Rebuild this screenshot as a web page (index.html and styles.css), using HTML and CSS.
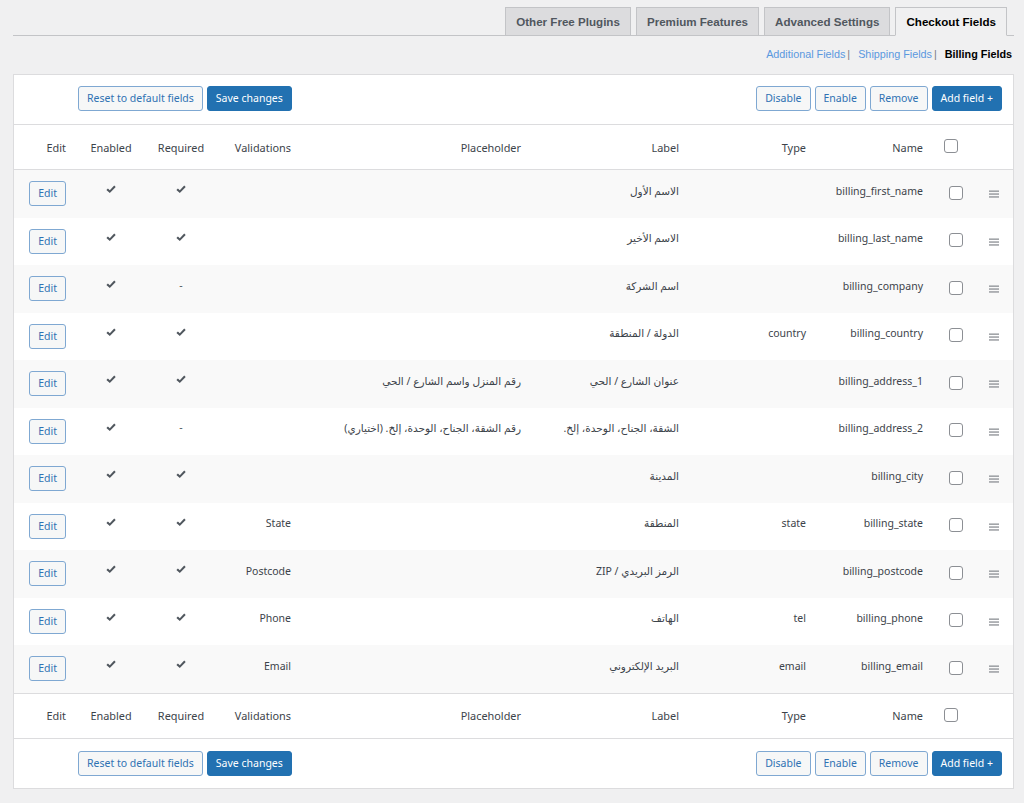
FILE: index.html
```html
<!DOCTYPE html>
<html lang="ar" dir="rtl">
<head>
<meta charset="utf-8">
<title>Checkout Fields</title>
<link rel="stylesheet" href="styles.css">
</head>
<body>
<div class="wrap">
  <nav class="tabs">
    <a class="tab active" href="#">Checkout Fields</a>
    <a class="tab" href="#">Advanced Settings</a>
    <a class="tab" href="#">Premium Features</a>
    <a class="tab" href="#">Other Free Plugins</a>
  </nav>

  <div class="subnav" dir="ltr">
    <a href="#" class="sublink">Additional Fields</a><span class="sep">|</span>
    <a href="#" class="sublink">Shipping Fields</a><span class="sep">|</span>
    <b class="current">Billing Fields</b>
  </div>

  <div class="box">
    <div class="actions">
      <div class="group">
        <button class="btn primary" dir="ltr">Add field +</button>
        <button class="btn">Remove</button>
        <button class="btn">Enable</button>
        <button class="btn">Disable</button>
      </div>
      <div class="group">
        <button class="btn primary">Save changes</button>
        <button class="btn">Reset to default fields</button>
      </div>
    </div>

    <div class="grid head">
      <div class="c c-drag"></div>
      <div class="c c-cb"><input type="checkbox" class="cb cb-head"></div>
      <div class="c c-name">Name</div>
      <div class="c c-type">Type</div>
      <div class="c c-label">Label</div>
      <div class="c c-ph">Placeholder</div>
      <div class="c c-val">Validations</div>
      <div class="c c-center">Required</div>
      <div class="c c-center">Enabled</div>
      <div class="c c-edit">Edit</div>
    </div>

    <div class="rows" id="rows"></div>

    <div class="grid head foot">
      <div class="c c-drag"></div>
      <div class="c c-cb"><input type="checkbox" class="cb cb-head"></div>
      <div class="c c-name">Name</div>
      <div class="c c-type">Type</div>
      <div class="c c-label">Label</div>
      <div class="c c-ph">Placeholder</div>
      <div class="c c-val">Validations</div>
      <div class="c c-center">Required</div>
      <div class="c c-center">Enabled</div>
      <div class="c c-edit">Edit</div>
    </div>

    <div class="actions bottom">
      <div class="group">
        <button class="btn primary" dir="ltr">Add field +</button>
        <button class="btn">Remove</button>
        <button class="btn">Enable</button>
        <button class="btn">Disable</button>
      </div>
      <div class="group">
        <button class="btn primary">Save changes</button>
        <button class="btn">Reset to default fields</button>
      </div>
    </div>
  </div>
</div>
<script src="script.js"></script>
</body>
</html>
```

FILE: script.js
```js
var data = [
  ["billing_first_name", "", "الاسم الأول", "", "", 1],
  ["billing_last_name", "", "الاسم الأخير", "", "", 1],
  ["billing_company", "", "اسم الشركة", "", "", 0],
  ["billing_country", "country", "الدولة / المنطقة", "", "", 1],
  ["billing_address_1", "", "عنوان الشارع / الحي", "رقم المنزل واسم الشارع / الحي", "", 1],
  ["billing_address_2", "", "الشقة، الجناح، الوحدة، إلخ.", "رقم الشقة، الجناح، الوحدة، إلخ. (اختياري)", "", 0],
  ["billing_city", "", "المدينة", "", "", 1],
  ["billing_state", "state", "المنطقة", "", "State", 1],
  ["billing_postcode", "", "الرمز البريدي / ZIP", "", "Postcode", 1],
  ["billing_phone", "tel", "الهاتف", "", "Phone", 1],
  ["billing_email", "email", "البريد الإلكتروني", "", "Email", 1]
];
var check = '<svg class="chk" width="10" height="9" viewBox="0 0 10 9"><path d="M0.4 4.9 L1.9 3.4 L3.8 5.2 L8.2 0.6 L9.7 2.1 L3.8 8.1 Z"/></svg>';
var drag = '<svg class="drag" width="10" height="8" viewBox="0 0 10 8"><rect x="0" y="0.5" width="10" height="1.3"/><rect x="0" y="3.4" width="10" height="1.3"/><rect x="0" y="6.3" width="10" height="1.3"/></svg>';
var html = "";
data.forEach(function (r) {
  html += '<div class="grid row">' +
    '<div class="c c-drag">' + drag + '</div>' +
    '<div class="c c-cb"><input type="checkbox" class="cb"></div>' +
    '<div class="c c-name txt">' + r[0] + '</div>' +
    '<div class="c c-type txt">' + r[1] + '</div>' +
    '<div class="c c-label txt">' + r[2] + '</div>' +
    '<div class="c c-ph txt">' + r[3] + '</div>' +
    '<div class="c c-val txt">' + r[4] + '</div>' +
    '<div class="c c-center mark">' + (r[5] ? check : '<span class="dash">-</span>') + '</div>' +
    '<div class="c c-center mark">' + check + '</div>' +
    '<div class="c c-edit"><button class="btn edit">Edit</button></div>' +
    '</div>';
});
document.getElementById("rows").innerHTML = html;
```

FILE: styles.css
```css
* { box-sizing: border-box; }

html, body {
  margin: 0;
  background: #f0f0f1;
}

body {
  font-family: "Noto Sans", "DejaVu Sans", sans-serif;
  font-size: 10.5px;
  color: #3c434a;
}

.wrap {
  margin: 0 10px 0 13px;
  padding-top: 7px;
}

/* Tabs */
.tabs {
  display: flex;
  gap: 5px;
  padding-right: 7px;
  border-bottom: 1px solid #c3c4c7;
}

.tab {
  display: block;
  margin-bottom: -1px;
  padding: 5px 10px;
  border: 1px solid #c3c4c7;
  background: #dcdcde;
  color: #50575e;
  font-family: "Liberation Sans", Arial, sans-serif;
  font-weight: bold;
  font-size: 11.6px;
  line-height: 17px;
  text-decoration: none;
  white-space: nowrap;
}

.tab.active {
  background: #f0f0f1;
  border-bottom-color: #f0f0f1;
  color: #000;
}

/* Sub navigation */
.subnav {
  margin: 10px 2px 12px 0;
  text-align: right;
  font-family: "Liberation Sans", Arial, sans-serif;
  font-size: 10.8px;
  line-height: 16px;
}

.sublink {
  color: #5a98df;
  text-decoration: none;
}

.sep {
  color: #787c82;
  margin: 0 5px 0 2px;
}

.current {
  color: #000;
}

/* Box */
.box {
  background: #fff;
  border: 1px solid #dcdcde;
}

.actions {
  display: flex;
  justify-content: space-between;
  padding: 11px 11px 13px 64px;
  border-bottom: 1px solid #dcdcde;
}

.actions.bottom {
  padding-top: 12px;
  padding-bottom: 12px;
  border-bottom: 0;
}

.group {
  display: flex;
  gap: 4px;
}

.btn {
  height: 25px;
  padding: 0 8px;
  border: 1px solid #7fa8d2;
  border-radius: 3px;
  background: #f6f7f7;
  color: #2f72b3;
  font-family: "Noto Sans", "DejaVu Sans", sans-serif;
  font-size: 10.5px;
  line-height: 23px;
  white-space: nowrap;
  cursor: pointer;
}

.btn.primary {
  background: #2271b1;
  border-color: #2271b1;
  color: #fff;
}

.btn.edit {
  padding: 0 8px;
}

/* Grid table */
.grid {
  display: grid;
  grid-template-columns: 38px 40px 119px 127px 158px 230px 86px 68px 72px 61px;
  align-items: center;
}

.head {
  height: 45px;
  border-bottom: 1px solid #dcdcde;
  font-size: 10.9px;
  color: #3c434a;
}

.foot {
  border-top: 1px solid #dcdcde;
  border-bottom: 1px solid #dcdcde;
  height: 46px;
}

.row {
  height: 47.5px;
}

.row:nth-child(odd) {
  background: #f9f9f9;
}

.c {
  padding-right: 10px;
  text-align: right;
  white-space: nowrap;
}

.c-name {
  padding-right: 12px;
}

.c-edit {
  padding-right: 9px;
}

.c-center,
.c-cb,
.c-drag {
  padding-right: 0;
  text-align: center;
}

.txt {
  padding-bottom: 6px;
  color: #3c434a;
}

.mark {
  padding-bottom: 7px;
  line-height: 9px;
}

.chk {
  display: inline-block;
  fill: #50575e;
}

.dash {
  color: #50575e;
  line-height: 9px;
}

.drag {
  display: block;
  margin: 1px auto 0;
  fill: #8c8f94;
}

.cb {
  -webkit-appearance: none;
  appearance: none;
  display: block;
  width: 14px;
  height: 14px;
  margin: 0 auto;
  border: 1px solid #8c8f94;
  border-radius: 3px;
  background: #fff;
}

.row .cb {
  margin: 0 12px 0 auto;
  position: relative;
  top: -1px;
}

.cb-head {
  margin: 0 17px 0 auto;
  position: relative;
  top: -1px;
}
```
